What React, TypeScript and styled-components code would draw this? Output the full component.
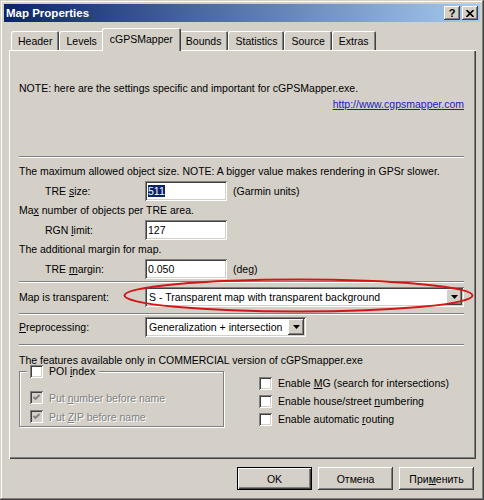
import React from 'react';
import styled, { createGlobalStyle, css } from 'styled-components';

const FACE = '#d4d0c8';

const GlobalStyle = createGlobalStyle`
  html, body {
    margin: 0;
    padding: 0;
    background: ${FACE};
  }
  body {
    font-family: "Liberation Sans", Arial, sans-serif;
    font-size: 10.5px;
    color: #000;
  }
  * {
    box-sizing: border-box;
  }
`;

const raised = css`
  box-shadow: inset -1px -1px #404040, inset 1px 1px #fff, inset -2px -2px #808080, inset 2px 2px ${FACE};
`;

const sunken = css`
  box-shadow: inset 1px 1px #808080, inset -1px -1px #fff, inset 2px 2px #404040, inset -2px -2px ${FACE};
`;

const Window = styled.div`
  width: 484px;
  height: 500px;
  padding: 4px;
  background: ${FACE};
  display: flex;
  flex-direction: column;
  box-shadow: inset -1px -1px #404040, inset 1px 1px ${FACE}, inset -2px -2px #808080, inset 2px 2px #fff;
`;

const TitleBar = styled.div`
  height: 18px;
  display: flex;
  align-items: center;
  padding: 0 2px 0 2px;
  background: linear-gradient(to right, #0a246a, #a6caf0);
  color: #fff;
  font-weight: bold;
  font-size: 11.5px;
`;

const TitleButtons = styled.div`
  margin-left: auto;
  display: flex;
  gap: 2px;
`;

const TitleButton = styled.div`
  width: 16px;
  height: 14px;
  background: ${FACE};
  ${raised};
  display: flex;
  align-items: center;
  justify-content: center;
  color: #000;
  font-weight: bold;
  font-size: 11px;
  line-height: 14px;
`;

const TabStrip = styled.div`
  height: 22px;
  margin: 6px 0 0 5px;
  padding-left: 2px;
  display: flex;
  align-items: flex-end;
  position: relative;
  z-index: 1;
`;

const Tab = styled.div<{ $active?: boolean }>`
  height: 19px;
  padding: 0 7px;
  display: flex;
  align-items: center;
  background: ${FACE};
  border-radius: 2px 2px 0 0;
  box-shadow: inset 1px 1px #fff, inset -1px 0 #404040, inset -2px 0 #808080;
  white-space: nowrap;
  ${({ $active }) =>
    $active &&
    css`
      height: 23px;
      margin: 0 -2px -1px;
      padding: 0 8px 2px;
      position: relative;
      z-index: 2;
    `}
`;

const Panel = styled.div`
  height: 409px;
  margin: 0 4px 0 5px;
  padding: 32px 12px 0 10px;
  background: ${FACE};
  box-shadow: inset 1px 1px #fff, inset -1px -1px #404040, inset -2px -2px #808080;
  display: flex;
  flex-direction: column;
`;

const Line = styled.div<{ $top?: number; $height?: number }>`
  line-height: ${({ $height }) => $height ?? 13}px;
  margin-top: ${({ $top }) => $top ?? 0}px;
  white-space: nowrap;
`;

const Link = styled.a`
  align-self: flex-end;
  margin-top: 3px;
  line-height: 13px;
  color: #1a1acc;
  text-decoration: underline;
`;

const Separator = styled.div<{ $top: number }>`
  height: 2px;
  margin-top: ${({ $top }) => $top}px;
  border-top: 1px solid #808080;
  border-bottom: 1px solid #fff;
`;

const FieldRow = styled.div<{ $top?: number }>`
  height: 20px;
  margin-top: ${({ $top }) => $top ?? 0}px;
  display: flex;
  align-items: center;
  position: relative;
`;

const FieldLabel = styled.div<{ $indent?: number }>`
  width: 126px;
  padding-left: ${({ $indent }) => $indent ?? 0}px;
  white-space: nowrap;
`;

const TextBox = styled.div`
  width: 82px;
  height: 20px;
  padding: 0 3px;
  display: flex;
  align-items: center;
  background: #fff;
  ${sunken};
`;

const Selected = styled.span`
  background: #0a246a;
  color: #fff;
`;

const Unit = styled.span`
  margin-left: 6px;
`;

const Combo = styled.div<{ $width: number }>`
  width: ${({ $width }) => $width}px;
  height: 20px;
  padding: 2px;
  display: flex;
  align-items: stretch;
  background: #fff;
  ${sunken};
`;

const ComboText = styled.div`
  flex: 1;
  padding-left: 2px;
  display: flex;
  align-items: center;
  white-space: nowrap;
  overflow: hidden;
`;

const ComboButton = styled.div`
  width: 16px;
  background: ${FACE};
  ${raised};
  display: flex;
  align-items: center;
  justify-content: center;
`;

const Mark = styled.svg`
  position: absolute;
  left: 104px;
  top: -8px;
  pointer-events: none;
  overflow: visible;
`;

const Mn = styled.span`
  text-decoration: underline;
`;

const Features = styled.div`
  display: flex;
`;

const GroupBox = styled.fieldset`
  width: 205px;
  margin: -2px 0 0;
  padding: 10px 0 0 10px;
  height: 62px;
  border: 1px solid #808080;
  box-shadow: 1px 1px 0 #fff, inset 1px 1px 0 #fff;
`;

const Legend = styled.legend`
  margin-left: -3px;
  padding: 0 4px 0 3px;
  background: ${FACE};
  display: flex;
  align-items: center;
  gap: 6px;
  line-height: 13px;
`;

const CheckColumn = styled.div`
  margin-left: 35px;
  padding-top: 7px;
  display: flex;
  flex-direction: column;
`;

const CheckRow = styled.div<{ $disabled?: boolean }>`
  height: 18px;
  display: flex;
  align-items: center;
  gap: 6px;
  white-space: nowrap;
  ${({ $disabled }) =>
    $disabled &&
    css`
      height: 19px;
      color: #808080;
      text-shadow: 1px 1px 0 #fff;
    `}
`;

const Box = styled.div<{ $disabled?: boolean }>`
  width: 13px;
  height: 13px;
  flex: none;
  background: ${({ $disabled }) => ($disabled ? FACE : '#fff')};
  ${sunken};
  display: flex;
  align-items: center;
  justify-content: center;
`;

const ButtonRow = styled.div`
  margin-top: 8px;
  padding-right: 6px;
  display: flex;
  justify-content: flex-end;
  gap: 6px;
`;

const Button = styled.div<{ $default?: boolean }>`
  width: 75px;
  height: 23px;
  display: flex;
  align-items: center;
  justify-content: center;
  background: ${FACE};
  ${raised};
  ${({ $default }) =>
    $default &&
    css`
      box-shadow: inset 0 0 0 1px #000, inset 2px 2px #fff, inset -2px -2px #404040, inset -3px -3px #808080;
    `}
`;

function Arrow() {
  return (
    <svg width="7" height="4" viewBox="0 0 7 4">
      <path d="M0 0h7L3.5 4z" fill="#000" />
    </svg>
  );
}

function CheckBox({ checked, disabled }: { checked?: boolean; disabled?: boolean }) {
  return (
    <Box $disabled={disabled}>
      {checked && (
        <svg width="9" height="9" viewBox="0 0 9 9">
          <path d="M1.5 4l2 2 4-4" fill="none" stroke={disabled ? '#808080' : '#000'} strokeWidth="1.8" />
        </svg>
      )}
    </Box>
  );
}

const tabs = ['Header', 'Levels', 'cGPSMapper', 'Bounds', 'Statistics', 'Source', 'Extras'];

export default function App() {
  return (
    <>
      <GlobalStyle />
      <Window>
        <TitleBar>
          Map Properties
          <TitleButtons>
            <TitleButton>?</TitleButton>
            <TitleButton>
              <svg width="8" height="7" viewBox="0 0 8 7">
                <path d="M0.5 0l7 7M7.5 0l-7 7" stroke="#000" strokeWidth="1.6" />
              </svg>
            </TitleButton>
          </TitleButtons>
        </TitleBar>

        <TabStrip>
          {tabs.map((t) => (
            <Tab key={t} $active={t === 'cGPSMapper'}>
              {t}
            </Tab>
          ))}
        </TabStrip>

        <Panel>
          <Line>NOTE: here are the settings specific and important for cGPSMapper.exe.</Line>
          <Link href="#">http://www.cgpsmapper.com</Link>

          <Separator $top={45} />
          <Line $top={4} $height={19}>
            The maximum allowed object size. NOTE: A bigger value makes rendering in GPSr slower.
          </Line>
          <FieldRow>
            <FieldLabel $indent={26}>
              TRE <Mn>s</Mn>ize:
            </FieldLabel>
            <TextBox>
              <Selected>511</Selected>
            </TextBox>
            <Unit>(Garmin units)</Unit>
          </FieldRow>
          <Line $height={19}>
            Ma<Mn>x</Mn> number of objects per TRE area.
          </Line>
          <FieldRow>
            <FieldLabel $indent={26}>
              RGN <Mn>l</Mn>imit:
            </FieldLabel>
            <TextBox>127</TextBox>
          </FieldRow>
          <Line $height={19}>The additional margin for map.</Line>
          <FieldRow>
            <FieldLabel $indent={26}>
              TRE <Mn>m</Mn>argin:
            </FieldLabel>
            <TextBox>0.050</TextBox>
            <Unit>(deg)</Unit>
          </FieldRow>

          <Separator $top={2} />
          <FieldRow $top={4}>
            <FieldLabel>Map is transparent:</FieldLabel>
            <Combo $width={319}>
              <ComboText>S - Transparent map with transparent background</ComboText>
              <ComboButton>
                <Arrow />
              </ComboButton>
            </Combo>
            {/* red highlight ring around the transparency combo */}
            <Mark width="351" height="34" viewBox="0 0 351 34">
              <ellipse cx="175.5" cy="16.5" rx="174" ry="16" fill="none" stroke="#d01818" strokeWidth="2" />
            </Mark>
          </FieldRow>

          <Separator $top={6} />
          <FieldRow $top={2}>
            <FieldLabel>
              <Mn>P</Mn>reprocessing:
            </FieldLabel>
            <Combo $width={161}>
              <ComboText>Generalization + intersection</ComboText>
              <ComboButton>
                <Arrow />
              </ComboButton>
            </Combo>
          </FieldRow>

          <Separator $top={7} />
          <Line $top={8}>The features available only in COMMERCIAL version of cGPSmapper.exe</Line>

          <Features>
            <GroupBox>
              <Legend>
                <CheckBox />
                <span>
                  POI <Mn>i</Mn>ndex
                </span>
              </Legend>
              <CheckRow $disabled>
                <CheckBox checked disabled />
                <span>
                  Put <Mn>n</Mn>umber before name
                </span>
              </CheckRow>
              <CheckRow $disabled>
                <CheckBox checked disabled />
                <span>
                  Put <Mn>Z</Mn>IP before name
                </span>
              </CheckRow>
            </GroupBox>

            <CheckColumn>
              <CheckRow>
                <CheckBox />
                <span>
                  Enable <Mn>M</Mn>G (search for intersections)
                </span>
              </CheckRow>
              <CheckRow>
                <CheckBox />
                <span>
                  Enable house/street <Mn>n</Mn>umbering
                </span>
              </CheckRow>
              <CheckRow>
                <CheckBox />
                <span>
                  Enable automatic <Mn>r</Mn>outing
                </span>
              </CheckRow>
            </CheckColumn>
          </Features>
        </Panel>

        <ButtonRow>
          <Button $default>OK</Button>
          <Button>Отмена</Button>
          <Button>
            При<Mn>м</Mn>енить
          </Button>
        </ButtonRow>
      </Window>
    </>
  );
}
